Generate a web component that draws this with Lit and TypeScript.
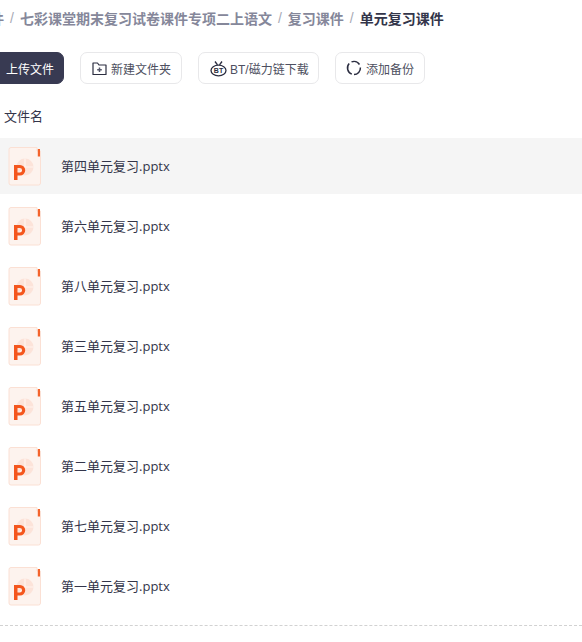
import { LitElement, html, css, svg } from "lit";
import { customElement } from "lit/decorators.js";

const FILES = ["第四单元复习", "第六单元复习", "第八单元复习", "第三单元复习", "第五单元复习", "第二单元复习", "第七单元复习", "第一单元复习"];

const pptIcon = html`<svg class="ppt" width="34" height="40" viewBox="0 0 34 40">
  <path d="M3 1.500H29V5H32.500V37a2 2 0 0 1-2 2H3a2 2 0 0 1-2-2V3.500a2 2 0 0 1 2-2z" fill="#fdf3ee" stroke="#fbe0d4" stroke-width="1"/>
  <rect x="29.800" y="3" width="2.200" height="7.500" fill="#f4632c"/>
  <circle cx="17" cy="21" r="8.500" fill="#fce3d9"/>
  <path d="M17 12.500V21H25.500M17 21L11 27" stroke="#fff3ee" stroke-width="1.200" fill="none"/>
  <path d="M6 34V19H12a5.200 5.200 0 0 1 0 10.500H9.500V34z M9.500 22V26.500H11.800a2.250 2.250 0 0 0 0-4.500z" fill="#f4561d" fill-rule="evenodd"/>
</svg>`;

const folderIcon = svg`<svg width="15" height="15" viewBox="0 0 15 15" fill="none" stroke="#2b2d40" stroke-width="1.200"><path d="M1 2H5.500L7 4H14V13.500H1z" stroke-linejoin="round"/><path d="M7.500 6.500V11M5.200 8.700H9.800" stroke-width="1.500" stroke="#55576a"/></svg>`;

const btIcon = svg`<svg width="17" height="17" viewBox="0 0 17 17" fill="none" stroke="#2b2d40" stroke-width="1.300"><ellipse cx="8.500" cy="10.500" rx="7.500" ry="5.300"/><path d="M5 1.500L7.500 4.800M12 1.500L9.500 4.800" stroke-width="1.400"/><text x="8.500" y="13" text-anchor="middle" font-family="Liberation Sans, sans-serif" font-size="7" font-weight="700" fill="#2b2d40" stroke="none">BT</text></svg>`;

const backupIcon = svg`<svg width="16" height="16" viewBox="0 0 16 16" fill="none" stroke="#2b2d40" stroke-width="1.500"><path d="M5.500 1.900A6.500 6.500 0 0 1 13.500 4.500"/><path d="M14.400 7.500A6.500 6.500 0 0 1 8 14.500"/><path d="M5.800 14.100A6.500 6.500 0 0 1 3.200 3.600"/></svg>`;

@customElement("app-root")
export class AppRoot extends LitElement {
  static styles = css`
    :host {
      display: block;
      width: 582px;
      height: 642px;
      overflow: hidden;
      background: #fff;
      font-family: "Liberation Sans", "Noto Sans CJK SC", sans-serif;
      color: #33354a;
    }
    .crumbs {
      display: flex;
      align-items: center;
      height: 20px;
      margin: 8px 0 0 -10px;
      font-size: 14px;
      font-weight: 700;
      color: #85879a;
      white-space: nowrap;
    }
    .sep { font-weight: 400; color: #a8aab5; margin: 0 6px; }
    .cur { color: #33354a; }
    .bar {
      display: flex;
      margin: 24px 0 0 -10px;
      height: 32px;
    }
    .btn {
      display: flex;
      align-items: center;
      gap: 4px;
      box-sizing: border-box;
      height: 32px;
      border: 1px solid #e8e8ea;
      border-radius: 7px;
      font-size: 12px;
      color: #4d4f60;
      white-space: nowrap;
      background: #fff;
    }
    .primary {
      background: #383a52;
      border-color: #383a52;
      color: #fff;
      width: 74px;
      padding-left: 15px;
      margin-right: 16px;
    }
    .b1 { width: 102px; padding-left: 11px; margin-right: 16px; }
    .b2 { width: 121px; padding-left: 11px; margin-right: 16px; gap: 3px; }
    .b3 { width: 90px; padding-left: 10px; }
    .head {
      height: 20px;
      margin: 23px 0 0 4px;
      font-size: 13px;
      line-height: 20px;
      color: #33354a;
    }
    .list { display: flex; flex-direction: column; gap: 4px; margin-top: 11px; }
    .row {
      display: flex;
      align-items: center;
      height: 56px;
      padding-left: 8px;
      padding-bottom: 2px;
      box-sizing: border-box;
      font-family: "Open Sans", "Noto Sans CJK SC", sans-serif;
      font-size: 13px;
      color: #33354a;
    }
    .row.on { background: #f5f5f5; }
    .ppt { display: block; flex: none; margin: 2px 19px 0 0; }
    .foot { border-top: 1px dashed #d2d2d2; margin-top: 11px; }
  `;

  render() {
    return html`
      <div class="crumbs">
        <span>件</span><span class="sep">/</span>
        <span>七彩课堂期末复习试卷课件专项二上语文</span><span class="sep">/</span>
        <span>复习课件</span><span class="sep">/</span>
        <span class="cur">单元复习课件</span>
      </div>
      <div class="bar">
        <div class="btn primary">上传文件</div>
        <div class="btn b1">${folderIcon}新建文件夹</div>
        <div class="btn b2">${btIcon}BT/磁力链下载</div>
        <div class="btn b3">${backupIcon}添加备份</div>
      </div>
      <div class="head">文件名</div>
      <div class="list">
        ${FILES.map((f, i) => html`<div class="row ${i === 0 ? "on" : ""}">${pptIcon}<span>${f}.pptx</span></div>`)}
      </div>
      <div class="foot"></div>
    `;
  }
}
